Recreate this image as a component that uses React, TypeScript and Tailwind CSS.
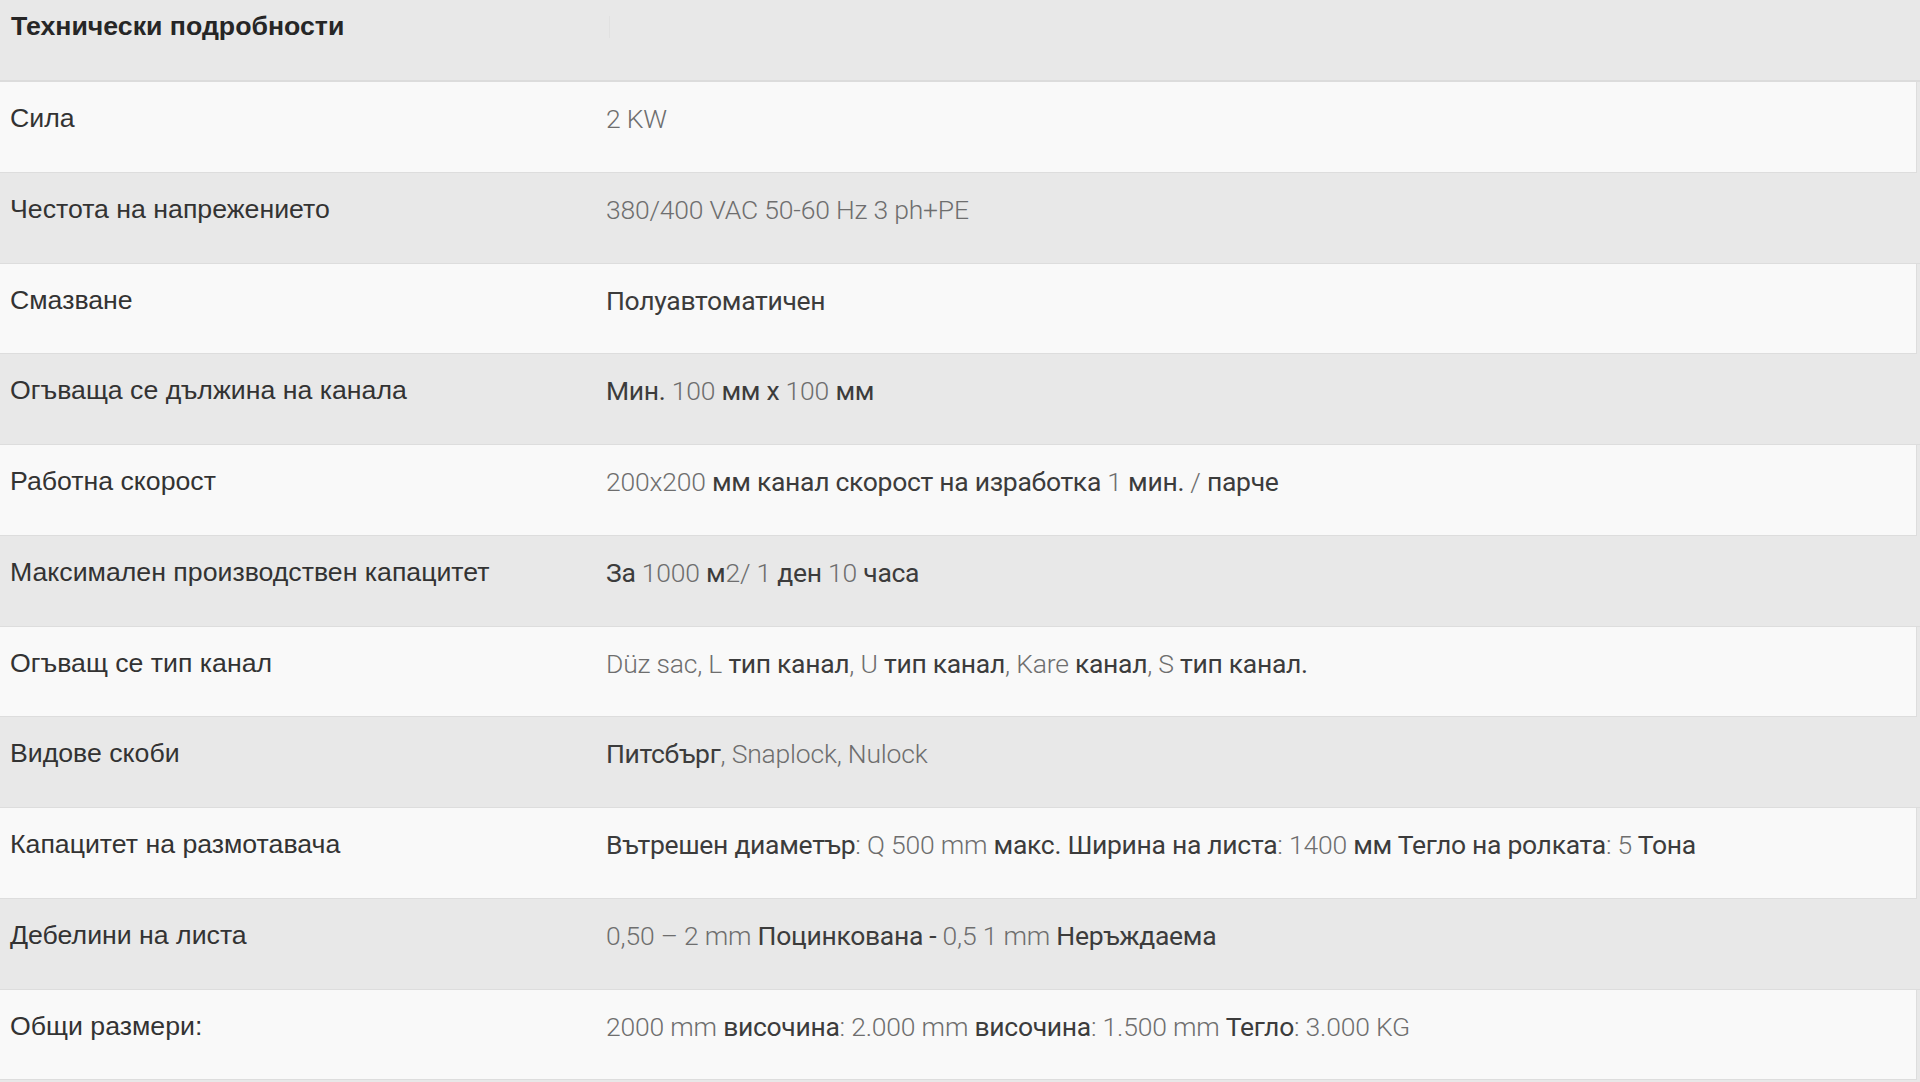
import React from "react";

type Seg = [string, "c" | "l"];

const rows: { label: string; value: Seg[] }[] = [
  { label: "Сила", value: [["2 KW", "l"]] },
  { label: "Честота на напрежението", value: [["380/400 VAC 50-60 Hz 3 ph+PE", "l"]] },
  { label: "Смазване", value: [["Полуавтоматичен", "c"]] },
  {
    label: "Огъваща се дължина на канала",
    value: [
      ["Мин.", "c"],
      [" 100 ", "l"],
      ["мм х", "c"],
      [" 100 ", "l"],
      ["мм", "c"],
    ],
  },
  {
    label: "Работна скорост",
    value: [
      ["200x200", "l"],
      [" мм канал скорост на изработка ", "c"],
      ["1", "l"],
      [" мин. ", "c"],
      ["/", "l"],
      [" парче", "c"],
    ],
  },
  {
    label: "Максимален производствен капацитет",
    value: [
      ["За ", "c"],
      ["1000", "l"],
      [" м", "c"],
      ["2/ 1", "l"],
      [" ден ", "c"],
      ["10", "l"],
      [" часа", "c"],
    ],
  },
  {
    label: "Огъващ се тип канал",
    value: [
      ["Düz sac, L", "l"],
      [" тип канал", "c"],
      [", U", "l"],
      [" тип канал", "c"],
      [", Kare", "l"],
      [" канал", "c"],
      [", S", "l"],
      [" тип канал.", "c"],
    ],
  },
  {
    label: "Видове скоби",
    value: [
      ["Питсбърг", "c"],
      [", Snaplock, Nulock", "l"],
    ],
  },
  {
    label: "Капацитет на размотавача",
    value: [
      ["Вътрешен диаметър", "c"],
      [": Q 500 mm", "l"],
      [" макс. Ширина на листа", "c"],
      [": 1400", "l"],
      [" мм Тегло на ролката", "c"],
      [": 5", "l"],
      [" Тона", "c"],
    ],
  },
  {
    label: "Дебелини на листа",
    value: [
      ["0,50 – 2 mm", "l"],
      [" Поцинкована - ", "c"],
      ["0,5 1 mm", "l"],
      [" Неръждаема", "c"],
    ],
  },
  {
    label: "Общи размери:",
    value: [
      ["2000 mm", "l"],
      [" височина", "c"],
      [": 2.000 mm", "l"],
      [" височина", "c"],
      [": 1.500 mm", "l"],
      [" Тегло", "c"],
      [": 3.000 KG", "l"],
    ],
  },
];

export default function App() {
  return (
    <div className="w-[1920px] h-[1082px] overflow-hidden bg-[#e8e8e8]">
      <div className="flex h-[82px] border-b-2 border-[#dcdcdc] bg-[#e8e8e8]">
        <div className="w-[606px] shrink-0 pl-[11px] pt-[11px] leading-[30px] text-[26.7px] font-bold text-[#262626] font-['Liberation_Sans',_Arial,_sans-serif]">
          Технически подробности
        </div>
        <div className="flex-1 pt-[16px] pl-[3px]">
          <div className="w-px h-[22px] bg-[#e1e1e1]" />
        </div>
      </div>
      {rows.map((r, i) => (
        <div
          key={i}
          className={
            i % 2 === 0
              ? "flex h-[90.75px] mr-[3px] border-b border-r border-[#dddddd] bg-[#f9f9f9]"
              : "flex h-[90.75px] border-b border-[#dddddd] bg-[#e8e8e8]"
          }
        >
          <div className="w-[606px] shrink-0 pl-[10px] pt-[21px] leading-[30px] text-[26.7px] text-[#333333] font-['Liberation_Sans',_Arial,_sans-serif]">
            {r.label}
          </div>
          <div className="flex-1 pt-[21px] leading-[30px] text-[26.5px] whitespace-pre">
            {r.value.map((s, j) =>
              s[1] === "c" ? (
                <span key={j} className="text-[#3c3c3c] tracking-[-0.3px] font-['Roboto',_'Liberation_Sans',_sans-serif]">
                  {s[0]}
                </span>
              ) : (
                <span key={j} className="text-[#6e6e6e] tracking-[-0.2px] font-light font-['Roboto',_'Liberation_Sans',_sans-serif]">
                  {s[0]}
                </span>
              )
            )}
          </div>
        </div>
      ))}
    </div>
  );
}
